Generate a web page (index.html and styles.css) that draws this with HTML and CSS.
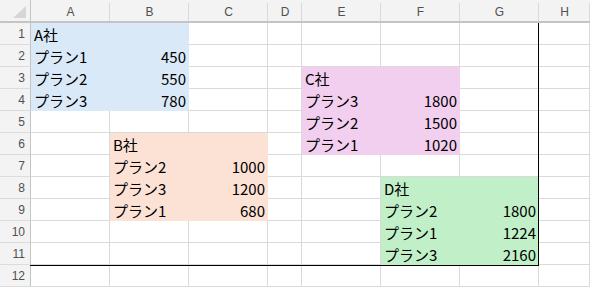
FILE: index.html
```html
<!DOCTYPE html>
<html lang="ja">
<head>
<meta charset="utf-8">
<title>Sheet</title>
<link rel="stylesheet" href="styles.css">
</head>
<body>
<div class="sheet">
  <div class="grid">
    <div class="corner"><svg width="14" height="13" viewBox="0 0 14 13"><polygon points="13,0 13,12 0,12" fill="#d6d6d6"/></svg></div>
    <div class="hd">A</div><div class="hd">B</div><div class="hd">C</div><div class="hd">D</div><div class="hd">E</div><div class="hd">F</div><div class="hd">G</div><div class="hd">H</div>

    <div class="rh">1</div>
    <div class="c blue">A社</div><div class="c blue"></div><div class="c"></div><div class="c"></div><div class="c"></div><div class="c"></div><div class="c"></div><div class="c"></div>

    <div class="rh">2</div>
    <div class="c blue">プラン1</div><div class="c blue num">450</div><div class="c"></div><div class="c"></div><div class="c"></div><div class="c"></div><div class="c"></div><div class="c"></div>

    <div class="rh">3</div>
    <div class="c blue">プラン2</div><div class="c blue num">550</div><div class="c"></div><div class="c"></div><div class="c pink">C社</div><div class="c pink"></div><div class="c"></div><div class="c"></div>

    <div class="rh">4</div>
    <div class="c blue">プラン3</div><div class="c blue num">780</div><div class="c"></div><div class="c"></div><div class="c pink">プラン3</div><div class="c pink num">1800</div><div class="c"></div><div class="c"></div>

    <div class="rh">5</div>
    <div class="c"></div><div class="c"></div><div class="c"></div><div class="c"></div><div class="c pink">プラン2</div><div class="c pink num">1500</div><div class="c"></div><div class="c"></div>

    <div class="rh">6</div>
    <div class="c"></div><div class="c peach">B社</div><div class="c peach"></div><div class="c"></div><div class="c pink">プラン1</div><div class="c pink num">1020</div><div class="c"></div><div class="c"></div>

    <div class="rh">7</div>
    <div class="c"></div><div class="c peach">プラン2</div><div class="c peach num">1000</div><div class="c"></div><div class="c"></div><div class="c"></div><div class="c"></div><div class="c"></div>

    <div class="rh">8</div>
    <div class="c"></div><div class="c peach">プラン3</div><div class="c peach num">1200</div><div class="c"></div><div class="c"></div><div class="c green">D社</div><div class="c green"></div><div class="c"></div>

    <div class="rh">9</div>
    <div class="c"></div><div class="c peach">プラン1</div><div class="c peach num">680</div><div class="c"></div><div class="c"></div><div class="c green">プラン2</div><div class="c green num">1800</div><div class="c"></div>

    <div class="rh">10</div>
    <div class="c"></div><div class="c"></div><div class="c"></div><div class="c"></div><div class="c"></div><div class="c green">プラン1</div><div class="c green num">1224</div><div class="c"></div>

    <div class="rh">11</div>
    <div class="c"></div><div class="c"></div><div class="c"></div><div class="c"></div><div class="c"></div><div class="c green">プラン3</div><div class="c green num">2160</div><div class="c"></div>

    <div class="rh">12</div>
    <div class="c"></div><div class="c"></div><div class="c"></div><div class="c"></div><div class="c"></div><div class="c"></div><div class="c"></div><div class="c"></div>
  </div>
  <div class="page-break"></div>
</div>
</body>
</html>
```

FILE: styles.css
```css
* { box-sizing: border-box; }
html, body { margin: 0; padding: 0; background: #ffffff; }
.sheet {
  position: relative;
  width: 590px;
  height: 288px;
  overflow: hidden;
}
.grid {
  display: grid;
  grid-template-columns: 31px 79px 79px 79px 34px 79px 79px 79px 1fr;
  grid-template-rows: 23px repeat(12, 22px);
}
.corner {
  background: #f3f3f3;
  border-right: 1px solid #c4c4c4;
  border-bottom: 2px solid #c4c4c4;
  display: flex;
  justify-content: flex-end;
  align-items: flex-end;
  padding: 0 3px 2px 0;
}
.corner svg { display: block; }
.hd {
  background-color: #f3f3f3;
  background-image: linear-gradient(#d9d9d9, #d9d9d9);
  background-size: 1px 18px;
  background-position: right bottom;
  background-repeat: no-repeat;
  border-bottom: 2px solid #c4c4c4;
  font-family: "Liberation Sans", Arial, sans-serif;
  font-size: 12px;
  color: #505050;
  display: flex;
  justify-content: center;
  align-items: flex-end;
  padding-bottom: 3px;
  line-height: 12px;
}
.rh {
  background: #f3f3f3;
  border-right: 1px solid #c4c4c4;
  border-bottom: 1px solid #dcdcdc;
  font-family: "Liberation Sans", Arial, sans-serif;
  font-size: 12px;
  color: #505050;
  display: flex;
  justify-content: flex-end;
  align-items: center;
  padding-right: 5px;
  padding-top: 1px;
}
.c {
  border-right: 1px solid #dadada;
  border-bottom: 1px solid #dadada;
  font-family: "Noto Sans CJK JP", "Noto Sans", sans-serif;
  font-size: 15px;
  line-height: 21px;
  color: #000;
  display: flex;
  align-items: center;
  padding: 1px 3px 0 3px;
  white-space: nowrap;
}
.num { justify-content: flex-end; padding-right: 2px; }
.blue { background: #dae9f8; border-color: #dae9f8; }
.peach { background: #fbe2d5; border-color: #fbe2d5; }
.pink { background: #f2ceef; border-color: #f2ceef; }
.green { background: #c1f0c8; border-color: #c1f0c8; }
.page-break {
  position: absolute;
  left: 30px;
  top: 23px;
  width: 509px;
  height: 243px;
  border-right: 1px solid #000;
  border-bottom: 1px solid #000;
  pointer-events: none;
}
```
